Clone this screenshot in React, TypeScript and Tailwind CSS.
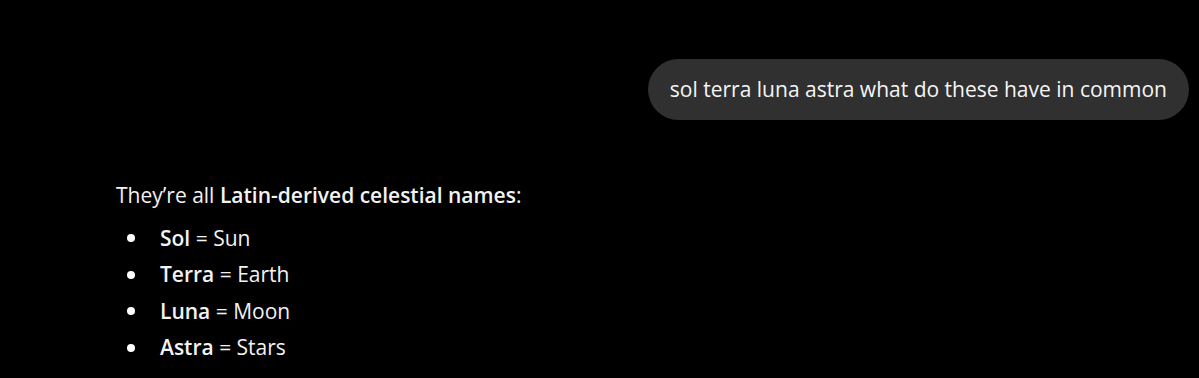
export default function App() {
  const items = [
    { name: "Sol", meaning: "Sun" },
    { name: "Terra", meaning: "Earth" },
    { name: "Luna", meaning: "Moon" },
    { name: "Astra", meaning: "Stars" },
  ];

  return (
    <div
      className="w-[1199px] h-[378px] bg-black text-white overflow-hidden"
      style={{ fontFamily: '"Open Sans", "Noto Sans", sans-serif' }}
    >
      <div className="flex justify-end pt-[59px] pr-[10px]">
        <div className="bg-[#303030] rounded-full px-[22px] py-[18px] text-[21px] leading-[25px] text-[#f5f5f5]">
          sol terra luna astra what do these have in common
        </div>
      </div>

      <div className="pl-[116px] pt-[60px] text-[21px] text-[#f2f2f2]">
        <p className="leading-[30px]">
          They’re all <strong className="font-semibold">Latin-derived celestial names</strong>:
        </p>
        <ul className="mt-[10px] flex flex-col">
          {items.map((item) => (
            <li key={item.name} className="flex items-center h-[36.5px]">
              <span className="w-[44px] pl-[11px] flex">
                <span className="w-[8px] h-[8px] rounded-full bg-white" />
              </span>
              <span>
                <strong className="font-semibold">{item.name}</strong> = {item.meaning}
              </span>
            </li>
          ))}
        </ul>
      </div>
    </div>
  );
}
